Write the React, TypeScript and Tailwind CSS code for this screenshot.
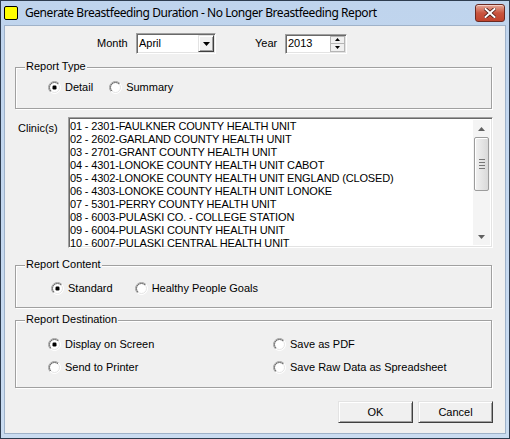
import { useId } from "react";

const clinics = [
  "01 - 2301-FAULKNER COUNTY HEALTH UNIT",
  "02 - 2602-GARLAND COUNTY HEALTH UNIT",
  "03 - 2701-GRANT COUNTY HEALTH UNIT",
  "04 - 4301-LONOKE COUNTY HEALTH UNIT CABOT",
  "05 - 4302-LONOKE COUNTY HEALTH UNIT ENGLAND (CLOSED)",
  "06 - 4303-LONOKE COUNTY HEALTH UNIT LONOKE",
  "07 - 5301-PERRY COUNTY HEALTH UNIT",
  "08 - 6003-PULASKI CO. - COLLEGE STATION",
  "09 - 6004-PULASKI COUNTY HEALTH UNIT",
  "10 - 6007-PULASKI CENTRAL HEALTH UNIT",
];

function Radio({ label, checked = false }: { label: string; checked?: boolean }) {
  const id = useId();
  return (
    <div className="flex items-center gap-[4px] leading-[13px]">
      <svg width="13" height="13" viewBox="0 0 13 13" className="shrink-0">
        <defs>
          <linearGradient id={id + "o"} x1="0" y1="0" x2="1" y2="1">
            <stop offset="0.5" stopColor="#a0a0a0" />
            <stop offset="0.5" stopColor="#ffffff" />
          </linearGradient>
          <linearGradient id={id + "i"} x1="0" y1="0" x2="1" y2="1">
            <stop offset="0.5" stopColor="#696969" />
            <stop offset="0.5" stopColor="#e3e3e3" />
          </linearGradient>
        </defs>
        <circle cx="6.5" cy="6.5" r="6" fill="#ffffff" stroke={`url(#${id}o)`} strokeWidth="1" />
        <circle cx="6.5" cy="6.5" r="5" fill="none" stroke={`url(#${id}i)`} strokeWidth="1" />
        {checked && <rect x="4.5" y="4.5" width="4" height="4" rx="1.2" fill="#000" />}
      </svg>
      <span className="whitespace-nowrap">{label}</span>
    </div>
  );
}

function GroupBox({
  title,
  className,
  children,
}: {
  title: string;
  className: string;
  children: React.ReactNode;
}) {
  return (
    <div
      className={`relative ml-[10px] w-[477px] border border-[#a0a0a0] shadow-[inset_1px_1px_0_#ffffff,1px_1px_0_#ffffff] ${className}`}
    >
      {/* legend sits on the border */}
      <span className="absolute left-[9px] top-[-8px] bg-[#f0f0f0] px-[1px] leading-[13px]">
        {title}
      </span>
      {children}
    </div>
  );
}

function Button({ label }: { label: string }) {
  return (
    <button className="flex h-[22px] w-[75px] items-center justify-center bg-[#f0f0f0] border border-t-[#e3e3e3] border-l-[#e3e3e3] border-r-[#404040] border-b-[#404040] shadow-[inset_1px_1px_0_#ffffff,inset_-1px_-1px_0_#a0a0a0]">
      {label}
    </button>
  );
}

const sunken =
  "border border-t-[#a0a0a0] border-l-[#a0a0a0] border-r-[#ffffff] border-b-[#ffffff] shadow-[inset_1px_1px_0_#696969,inset_-1px_-1px_0_#e3e3e3]";

export default function App() {
  return (
    <div className="flex h-[439px] w-[510px] flex-col border border-[#2e3c4f] bg-gradient-to-b from-[#bfd4ed] to-[#cadcf1] font-['Liberation_Sans',Arial,sans-serif] text-[11px] text-black">
      {/* Title bar */}
      <div className="flex h-[24px] shrink-0 items-center">
        <div className="ml-[3px] h-[14px] w-[14px] rounded-[2px] border border-black bg-[#ffff00]" />
        <span className="ml-[7px] font-['Noto_Sans',sans-serif] text-[12px] tracking-[-0.45px] text-black">
          Generate Breastfeeding Duration - No Longer Breastfeeding Report
        </span>
        <div className="ml-auto mr-[4px] flex h-[18px] w-[30px] items-center justify-center rounded-[3px] border border-[#6b2a22] bg-gradient-to-b from-[#e4a899] via-[#c9553f] to-[#c0432d] shadow-[inset_0_1px_0_#f3cfc6]">
          <svg width="12" height="10" viewBox="0 0 12 10">
            <path
              d="M1.5 1 L10.5 9 M10.5 1 L1.5 9"
              stroke="#4a1a14"
              strokeWidth="3.6"
              strokeLinecap="square"
            />
            <path
              d="M1.5 1 L10.5 9 M10.5 1 L1.5 9"
              stroke="#ffffff"
              strokeWidth="2"
              strokeLinecap="square"
            />
          </svg>
        </div>
      </div>

      {/* Client area */}
      <div className="mb-[4px] ml-[3px] mr-[3px] flex-1 border border-[#9fb2c9] bg-[#f0f0f0]">
        {/* Month / Year */}
        <div className="mt-[7px] flex h-[21px] items-center pl-[92px]">
          <span className="w-[39px]">Month</span>
          <div className={`flex h-[21px] w-[80px] items-center bg-white ${sunken}`}>
            <span className="ml-[2px] flex-1">April</span>
            <div className="mr-[1px] flex h-[17px] w-[16px] items-center justify-center bg-[#f0f0f0] border border-t-[#e3e3e3] border-l-[#e3e3e3] border-r-[#404040] border-b-[#404040] shadow-[inset_1px_1px_0_#ffffff,inset_-1px_-1px_0_#a0a0a0]">
              <svg width="7" height="4" viewBox="0 0 7 4">
                <path d="M0 0 H7 L3.5 4 Z" fill="#000" />
              </svg>
            </div>
          </div>
          <span className="ml-[39px] w-[30px]">Year</span>
          <div className={`flex h-[20px] w-[62px] items-center bg-white ${sunken}`}>
            <span className="ml-[2px] flex-1">2013</span>
            <div className="mr-[1px] flex h-[16px] w-[15px] flex-col">
              <div className="flex flex-1 items-center justify-center bg-[#f0f0f0] border border-[#b5b5b5]">
                <svg width="5" height="3" viewBox="0 0 5 3">
                  <path d="M2.5 0 L5 3 H0 Z" fill="#000" />
                </svg>
              </div>
              <div className="flex flex-1 items-center justify-center bg-[#f0f0f0] border border-t-0 border-[#b5b5b5]">
                <svg width="5" height="3" viewBox="0 0 5 3">
                  <path d="M0 0 H5 L2.5 3 Z" fill="#000" />
                </svg>
              </div>
            </div>
          </div>
        </div>

        {/* Report Type */}
        <GroupBox title="Report Type" className="mt-[13px] h-[42px]">
          <div className="mt-[13px] flex items-center pl-[32px]">
            <Radio label="Detail" checked />
            <div className="ml-[16px]">
              <Radio label="Summary" />
            </div>
          </div>
        </GroupBox>

        {/* Clinics */}
        <div className="mt-[8px] flex">
          <span className="ml-[13px] mt-[3px] w-[50px]">Clinic(s)</span>
          <div className={`flex h-[131px] w-[425px] bg-white ${sunken}`}>
            <div className="flex-1 pl-[1px] pt-[2px] leading-[13px] tracking-[-0.15px]">
              {clinics.map((c) => (
                <div key={c} className="h-[13px] whitespace-nowrap">
                  {c}
                </div>
              ))}
            </div>
            {/* scrollbar */}
            <div className="my-[2px] mr-[2px] flex w-[17px] flex-col items-center bg-[#f4f4f4]">
              <div className="flex h-[17px] items-center justify-center">
                <svg width="7" height="4" viewBox="0 0 7 4">
                  <path d="M3.5 0 L7 4 H0 Z" fill="#606060" />
                </svg>
              </div>
              <div className="flex h-[54px] w-[15px] flex-col items-center justify-center gap-[2px] rounded-[2px] border border-[#9c9c9c] bg-gradient-to-r from-[#f2f2f2] to-[#d9d9d9] shadow-[inset_1px_1px_0_#ffffff]">
                <div className="h-px w-[6px] bg-[#777]" />
                <div className="h-px w-[6px] bg-[#777]" />
                <div className="h-px w-[6px] bg-[#777]" />
                <div className="h-px w-[6px] bg-[#777]" />
              </div>
              <div className="flex-1" />
              <div className="flex h-[17px] items-center justify-center">
                <svg width="7" height="4" viewBox="0 0 7 4">
                  <path d="M0 0 H7 L3.5 4 Z" fill="#606060" />
                </svg>
              </div>
            </div>
          </div>
        </div>

        {/* Report Content */}
        <GroupBox title="Report Content" className="mt-[17px] h-[43px]">
          <div className="mt-[16px] flex items-center pl-[35px]">
            <Radio label="Standard" checked />
            <div className="ml-[22px]">
              <Radio label="Healthy People Goals" />
            </div>
          </div>
        </GroupBox>

        {/* Report Destination */}
        <GroupBox title="Report Destination" className="mt-[12px] h-[68px]">
          <div className="mt-[17px] grid grid-cols-[225px_1fr] gap-y-[10px] pl-[32px]">
            <Radio label="Display on Screen" checked />
            <Radio label="Save as PDF" />
            <Radio label="Send to Printer" />
            <Radio label="Save Raw Data as Spreadsheet" />
          </div>
        </GroupBox>

        {/* Buttons */}
        <div className="mr-[12px] mt-[13px] flex justify-end gap-[5px]">
          <Button label="OK" />
          <Button label="Cancel" />
        </div>
      </div>
    </div>
  );
}
